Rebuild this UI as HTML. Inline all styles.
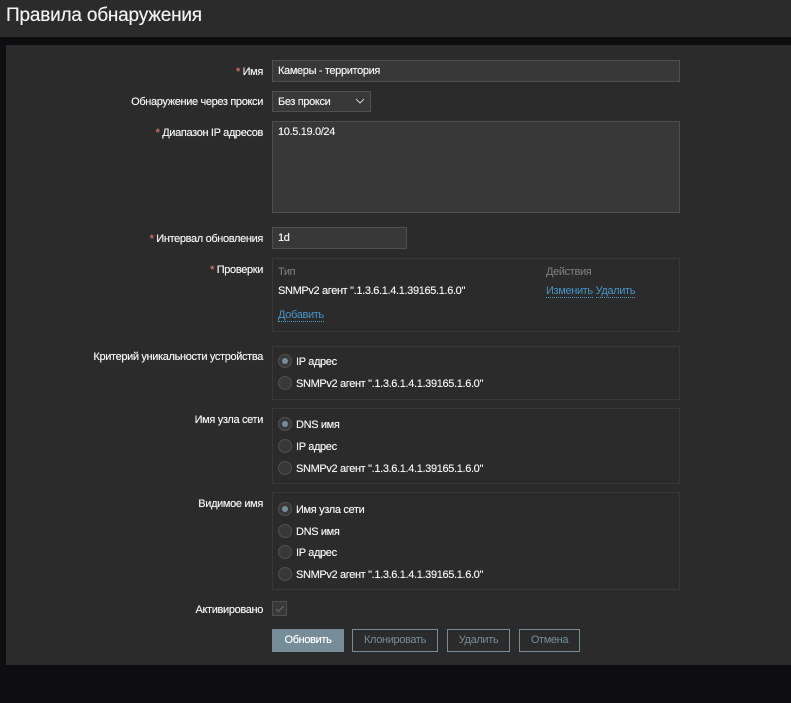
<!DOCTYPE html>
<html><head><meta charset="utf-8"><style>
*{box-sizing:border-box;margin:0;padding:0}
body{width:791px;height:703px;background:#0e0e10;font-family:"Liberation Sans",Arial,sans-serif;font-size:11px;letter-spacing:-0.35px;color:#f2f2f2;position:relative;overflow:hidden;text-shadow:0 0 0.4px #f2f2f2}
.hdr{position:absolute;left:0;top:0;width:791px;height:37px;background:#2b2b2b}
.hdr h1{position:absolute;left:6px;top:5px;font-size:19px;letter-spacing:-0.2px;font-weight:normal;color:#f2f2f2}
.panel{position:absolute;left:6px;top:45px;width:785px;height:620px;background:#2b2b2b}
.a,.lbl,.rt{margin-top:1px}
.a{position:absolute}
.lbl{position:absolute;right:528px;text-align:right;white-space:nowrap}
.req{color:#e45959}
.inp{position:absolute;background:#383838;border:1px solid #4f4f4f;padding:1px 5px 0;line-height:19px}
.box{position:absolute;border:1px solid #383838;left:272px;width:408px}
.r{position:absolute;left:278px;width:14px;height:14px;border-radius:50%;background:#383838;border:1px solid #4f4f4f}
.r.on::after{content:"";position:absolute;left:3px;top:3px;width:6px;height:6px;border-radius:50%;background:#768d99}
.rt{position:absolute;left:296px;white-space:nowrap}
.lnk{color:#4796c4;border-bottom:1px dotted #4796c4;text-shadow:none}
.btn{position:absolute;top:629px;height:23px;border:1px solid #768d99;color:#768d99;text-align:center;line-height:21px;text-shadow:none}
</style></head><body>
<div class="hdr"><h1>Правила обнаружения</h1></div>
<div class="panel"></div>
<div class="lbl" style="top:65px"><span class="req">*</span> Имя</div>
<div class="inp" style="left:272px;top:60px;width:408px;height:22px">Камеры - территория</div>
<div class="lbl" style="top:95px">Обнаружение через прокси</div>
<div class="inp" style="left:272px;top:91px;width:99px;height:21px;line-height:19px">Без прокси<svg style="position:absolute;right:5px;top:6px" width="10" height="6"><path d="M1 1 L5 5 L9 1" stroke="#ccc" fill="none"/></svg></div>
<div class="lbl" style="top:126px"><span class="req">*</span> Диапазон IP адресов</div>
<div class="inp" style="left:272px;top:121px;width:408px;height:92px;line-height:19px;padding-top:1px">10.5.19.0/24</div>
<div class="lbl" style="top:232px"><span class="req">*</span> Интервал обновления</div>
<div class="inp" style="left:272px;top:227px;width:135px;height:22px">1d</div>
<div class="lbl" style="top:263px"><span class="req">*</span> Проверки</div>
<div class="box" style="top:258px;height:74px"></div>
<div class="a" style="left:278px;top:265px;color:#808080;text-shadow:none">Тип</div>
<div class="a" style="left:546px;top:265px;color:#808080;text-shadow:none">Действия</div>
<div class="a" style="left:278px;top:284px">SNMPv2 агент ".1.3.6.1.4.1.39165.1.6.0"</div>
<div class="a" style="left:546px;top:284px"><span class="lnk">Изменить</span> <span class="lnk">Удалить</span></div>
<div class="a" style="left:278px;top:308px"><span class="lnk">Добавить</span></div>
<div class="lbl" style="top:350px">Критерий уникальности устройства</div>
<div class="box" style="top:346px;height:54px"></div>
<div class="r on" style="top:354px"></div><div class="rt" style="top:355px">IP адрес</div>
<div class="r" style="top:376px"></div><div class="rt" style="top:377px">SNMPv2 агент ".1.3.6.1.4.1.39165.1.6.0"</div>
<div class="lbl" style="top:413px">Имя узла сети</div>
<div class="box" style="top:408px;height:76px"></div>
<div class="r on" style="top:417px"></div><div class="rt" style="top:418px">DNS имя</div>
<div class="r" style="top:439px"></div><div class="rt" style="top:440px">IP адрес</div>
<div class="r" style="top:461px"></div><div class="rt" style="top:462px">SNMPv2 агент ".1.3.6.1.4.1.39165.1.6.0"</div>
<div class="lbl" style="top:497px">Видимое имя</div>
<div class="box" style="top:492px;height:98px"></div>
<div class="r on" style="top:502px"></div><div class="rt" style="top:503px">Имя узла сети</div>
<div class="r" style="top:524px"></div><div class="rt" style="top:525px">DNS имя</div>
<div class="r" style="top:545px"></div><div class="rt" style="top:546px">IP адрес</div>
<div class="r" style="top:567px"></div><div class="rt" style="top:568px">SNMPv2 агент ".1.3.6.1.4.1.39165.1.6.0"</div>
<div class="lbl" style="top:603px">Активировано</div>
<div class="a" style="left:272px;top:601px;width:15px;height:15px;background:#383838;border:1px solid #4f4f4f;margin-top:0"><svg width="13" height="13" style="position:absolute;left:0;top:0"><path d="M3 7 L5.5 9.5 L10.5 4" stroke="#666" stroke-width="1.2" fill="none"/></svg></div>
<div class="btn" style="left:272px;width:72px;background:#768d99;color:#fff;border-color:#768d99;text-shadow:0 0 0.4px #fff">Обновить</div>
<div class="btn" style="left:352px;width:86px">Клонировать</div>
<div class="btn" style="left:447px;width:63px">Удалить</div>
<div class="btn" style="left:519px;width:61px">Отмена</div>
</body></html>
